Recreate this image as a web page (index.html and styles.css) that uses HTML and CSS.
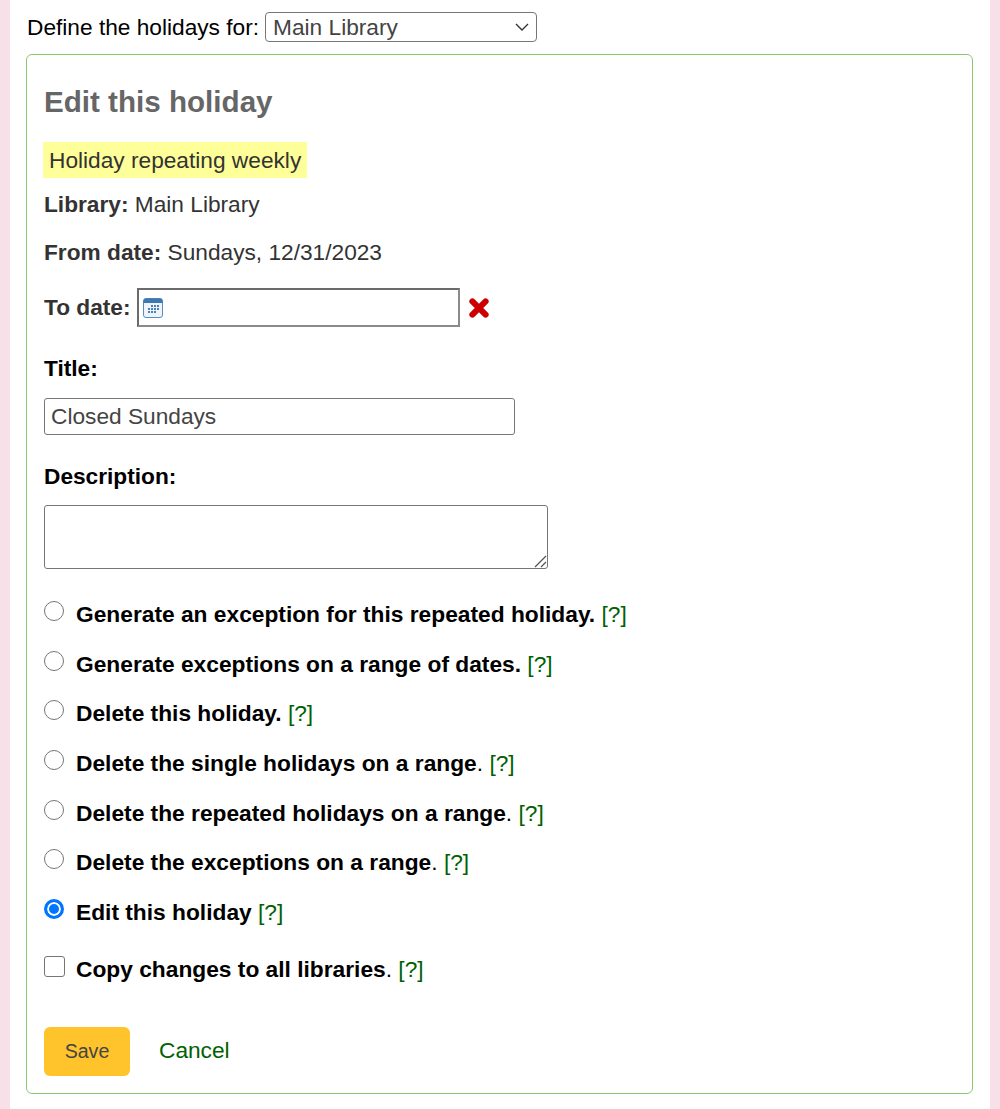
FILE: index.html
```html
<!DOCTYPE html>
<html lang="en">
<head>
    <meta charset="UTF-8">
    <title>Edit this holiday</title>
    <link rel="stylesheet" href="styles.css">
</head>
<body>
    <div class="container">
        <div class="branch-row">
            <label for="branch">Define the holidays for:</label>
            <div class="select-box">
                <span>Main Library</span>
                <svg width="14" height="8" viewBox="0 0 14 8"><path d="M1 1l6 6 6-6" fill="none" stroke="#333" stroke-width="1.4"/></svg>
            </div>
        </div>
        <form class="panel">
            <h3>Edit this holiday</h3>
            <div class="repeat-row"><span class="highlight">Holiday repeating weekly</span></div>
            <p class="info info-library"><strong>Library:</strong> Main Library</p>
            <p class="info info-date"><strong>From date:</strong> Sundays, 12/31/2023</p>
            <div class="to-date">
                <strong>To date:</strong>
                <div class="date-input">
                    <svg width="20" height="20" viewBox="0 0 20 20">
                        <rect x="0.5" y="0.5" width="19" height="19" rx="2.5" fill="#eef4fa" stroke="#5a8cbd"/>
                        <path d="M0.5 5V3a2.5 2.5 0 0 1 2.5-2.5h14a2.5 2.5 0 0 1 2.5 2.5v2z" fill="#3f78b0"/>
                        <g fill="#4a80b5">
                            <rect x="8" y="7" width="2" height="2"/><rect x="11" y="7" width="2" height="2"/><rect x="14" y="7" width="2" height="2"/>
                            <rect x="5" y="10" width="2" height="2"/><rect x="8" y="10" width="2" height="2"/><rect x="11" y="10" width="2" height="2"/><rect x="14" y="10" width="2" height="2"/>
                            <rect x="5" y="13" width="2" height="2"/><rect x="8" y="13" width="2" height="2"/><rect x="11" y="13" width="2" height="2"/>
                        </g>
                    </svg>
                </div>
                <svg class="clear-icon" width="22" height="22" viewBox="0 0 20 20"><path d="M4 4l12 12M16 4L4 16" stroke="#cc0000" stroke-width="5.5" stroke-linecap="round"/></svg>
            </div>
            <label class="field-label label-title">Title:</label>
            <div class="text-input">Closed Sundays</div>
            <label class="field-label label-desc">Description:</label>
            <div class="textarea">
                <svg class="grip" width="14" height="14" viewBox="0 0 14 14"><path d="M2 13L13 2M8 13l5-5" stroke="#555" stroke-width="1.3"/></svg>
            </div>
            <ul class="options">
                <li><span class="radio"></span><span><b>Generate an exception for this repeated holiday.</b> <a>[?]</a></span></li>
                <li><span class="radio"></span><span><b>Generate exceptions on a range of dates.</b> <a>[?]</a></span></li>
                <li><span class="radio"></span><span><b>Delete this holiday.</b> <a>[?]</a></span></li>
                <li><span class="radio"></span><span><b>Delete the single holidays on a range</b>. <a>[?]</a></span></li>
                <li><span class="radio"></span><span><b>Delete the repeated holidays on a range</b>. <a>[?]</a></span></li>
                <li><span class="radio"></span><span><b>Delete the exceptions on a range</b>. <a>[?]</a></span></li>
                <li><span class="radio checked"></span><span><b>Edit this holiday</b> <a>[?]</a></span></li>
            </ul>
            <div class="copy-row"><span class="checkbox"></span><span><b>Copy changes to all libraries</b>. <a>[?]</a></span></div>
            <div class="actions">
                <button type="button">Save</button>
                <a class="cancel">Cancel</a>
            </div>
        </form>
    </div>
</body>
</html>
```

FILE: styles.css
```css
* {
    margin: 0;
    padding: 0;
    box-sizing: border-box;
    font-family: "Liberation Sans", Arial, sans-serif;
}

body {
    background-color: #f8e0e8;
    padding: 0 10px;
    font-size: 22.7px;
    color: #333;
}

.container {
    background-color: #fff;
    padding: 12px 17px 16px 16px;
    height: 1109px;
}

.branch-row {
    display: flex;
    align-items: center;
    gap: 6px;
    height: 30px;
    padding-left: 1px;
    color: #000;
}

.select-box {
    width: 272px;
    height: 30px;
    border: 1px solid #767676;
    border-radius: 4px;
    padding: 0 7px;
    display: flex;
    align-items: center;
    justify-content: space-between;
    color: #444;
}

.panel {
    margin-top: 12px;
    height: 1040px;
    border: 1px solid #8cc66d;
    border-radius: 6px;
    padding: 0 17px;
}

h3 {
    font-size: 29.6px;
    font-weight: bold;
    color: #666;
    line-height: 34px;
    margin-top: 30px;
}

.repeat-row {
    margin-top: 23px;
    height: 36px;
}

.highlight {
    display: inline-block;
    background-color: #ffff99;
    padding: 0 6px;
    line-height: 36px;
    margin-left: -1px;
}

.info {
    line-height: 26px;
}

.info-library {
    margin-top: 13px;
}

.info-date {
    margin-top: 22px;
}

.to-date {
    display: flex;
    align-items: center;
    margin-top: 23px;
    height: 39px;
}

.date-input {
    width: 323px;
    height: 39px;
    margin-left: 6px;
    border: 2px solid #6b6b6b;
    border-bottom-color: #8a8a8a;
    border-right-color: #8a8a8a;
    padding: 0 4px;
    display: flex;
    align-items: center;
}

.clear-icon {
    margin-left: 8px;
}

.field-label {
    display: block;
    font-weight: bold;
    color: #000;
    line-height: 26px;
}

.label-title {
    margin-top: 28px;
}

.label-desc {
    margin-top: 28px;
}

.text-input {
    width: 471px;
    height: 37px;
    margin-top: 17px;
    border: 1px solid #767676;
    border-radius: 3px;
    padding: 0 6px;
    line-height: 35px;
    color: #444;
}

.textarea {
    position: relative;
    width: 504px;
    height: 64px;
    margin-top: 16px;
    border: 1px solid #767676;
    border-radius: 3px;
}

.grip {
    position: absolute;
    right: 0;
    bottom: 0;
}

.options {
    list-style: none;
    margin-top: 21px;
}

.options li, .copy-row {
    display: flex;
    align-items: center;
    height: 49.6px;
    color: #000;
}

b {
    font-weight: bold;
    color: #000;
    font-size: 22.75px;
}

a {
    color: #006100;
}

.radio {
    width: 20px;
    height: 20px;
    margin-right: 12px;
    margin-top: -7px;
    border: 1px solid #767676;
    border-radius: 50%;
    flex-shrink: 0;
}

.radio.checked {
    border: 3px solid #0075ff;
    box-shadow: inset 0 0 0 2px #fff;
    background-color: #0075ff;
}

.checkbox {
    width: 21px;
    height: 21px;
    margin-right: 11px;
    margin-top: -6px;
    border: 1.5px solid #767676;
    border-radius: 3px;
    flex-shrink: 0;
}

.copy-row {
    margin-top: 8px;
}

.actions {
    display: flex;
    align-items: center;
    margin-top: 32px;
}

button {
    width: 86px;
    height: 49px;
    background-color: #ffc32b;
    border: none;
    border-radius: 6px;
    font-size: 19.6px;
    color: #444;
}

.cancel {
    margin-left: 29px;
    margin-top: -2px;
    color: #006100;
}
```
